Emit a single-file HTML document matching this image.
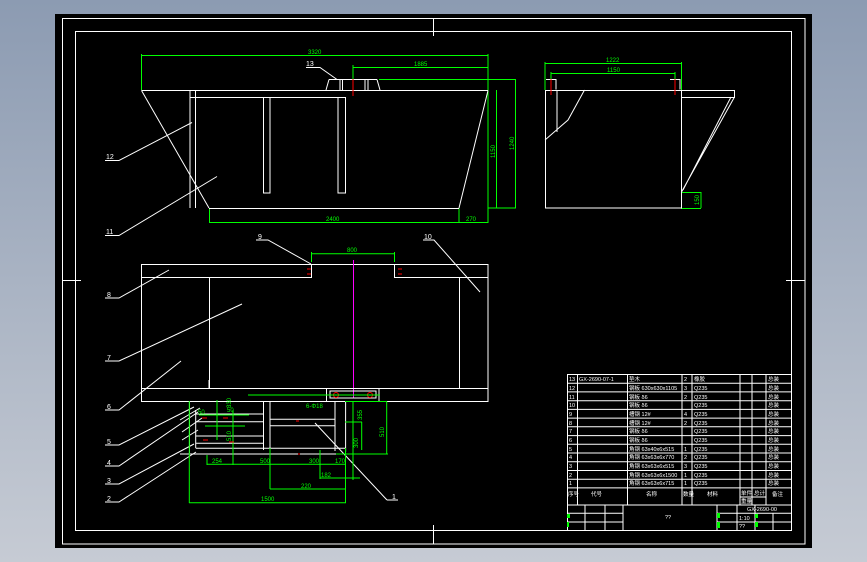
<!DOCTYPE html>
<html><head><meta charset="utf-8"><style>
html,body{margin:0;padding:0;width:867px;height:562px;overflow:hidden;background:linear-gradient(#8c9bb2,#c6cbd4);}
svg{position:absolute;left:0;top:0}
text{font-family:"Liberation Sans","Noto Sans CJK SC",sans-serif;}
.w{stroke:#fff;stroke-width:1;fill:none}
.g{stroke:#0f0;stroke-width:1;fill:none}
.r{stroke:#f00;stroke-width:1;fill:none}
.tg{fill:#0f0;font-size:6px}
.tw{fill:#fff;font-size:7px}
.tt{fill:#fff;font-size:5.5px}
</style></head><body>
<svg width="867" height="562" viewBox="0 0 867 562">
<rect x="55" y="14" width="757" height="534" fill="#000"/>
<rect x="62.5" y="18.5" width="742.5" height="525.5" class="w"/>
<rect x="75.5" y="31.5" width="716" height="499" class="w"/>
<path class="w" d="M433.5 18v18M433.5 525v19M62 280.5h19M786 280.5h19"/>

<!-- front view -->
<path class="g" d="M141.5 55.5H488M141.5 54V90M488 54v155M353 65v14M353 67.5H488M379 79.5h137M496.5 90v118M515.5 79v129M488 208h28M209.5 208v15M459 208v15M488 208v15M209 222.5h279"/>
<text class="tg" x="308" y="54">3320</text>
<text class="tg" x="414" y="66">1885</text>
<text class="tg" x="326" y="221">2400</text>
<text class="tg" x="466" y="221">270</text>
<text class="tg" transform="translate(495,158) rotate(-90)">1150</text>
<text class="tg" transform="translate(514,150) rotate(-90)">1240</text>
<path class="w" d="M141.5 90.5H488M190 97.5H346M141.5 90.5L209 208M488 90.5L459 208M209 208.5H459M190 90v118M195.5 90v118M263.5 97v96h6.5V97M338 97v96h7.5V97"/>
<path class="w" d="M329 79.5h48M326 90l3-10.5M380 90l-3-10.5M340 80v10M342.5 80v10M365 80v10M368 80v10"/>
<path class="r" d="M353 79v17"/>
<text class="tw" x="306" y="66">13</text>
<path class="w" d="M306 67.5h14l17 12"/>
<text class="tw" x="106" y="159">12</text><path class="w" d="M105 160.5h14l73-38"/>
<text class="tw" x="106" y="234">11</text><path class="w" d="M105 235.5h14l98-59"/>

<!-- side view -->
<path class="g" d="M545 63.5h136.5M545 62v28M681.5 62v28M551 73.5h124M551 72v8M675 72v8M681 192.5h20M701 192v16M681 208.5h20"/>
<text class="tg" x="606" y="62">1222</text>
<text class="tg" x="607" y="72">1150</text>
<text class="tg" transform="translate(699,205) rotate(-90)">150</text>
<path class="w" d="M545 90.5h189.5v7H681.5M545.5 90v118h136V90M734.5 97L681.5 192M731 97L683 190M557 90v42M584.5 90L568 120L545 140M546 79.5h10v10M670 79.5h10v10"/>
<path class="r" d="M551 79v16M675 79v16"/>

<!-- plan view -->
<rect x="141.5" y="264.5" width="346.5" height="137" class="w"/>
<path class="w" d="M141.5 277.5h170M394.5 277.5H488M141.5 388.5H326M379 388.5H488M209.5 277v111M459.5 277v111M311.5 264v14M394.5 264v14"/>
<path class="g" d="M311.5 253.8h83M311.5 252v10M394.5 252v10"/>
<text class="tg" x="347" y="252">800</text>
<path class="r" d="M307 269h4M307 274h4M398 269h4M398 274h4"/>
<path stroke="#f0f" d="M353.5 260v138" fill="none"/>
<rect x="326.5" y="388.5" width="52.5" height="13" class="w"/>
<rect x="330" y="391" width="46" height="7" class="w"/>
<circle cx="336" cy="395" r="2.5" class="r"/><circle cx="370" cy="395" r="2.5" class="r"/>
<text class="tw" x="258" y="239">9</text><path class="w" d="M256 240h12l43 24"/>
<text class="tw" x="424" y="239">10</text><path class="w" d="M423 240h11l46 52"/>
<text class="tw" x="107" y="297">8</text><path class="w" d="M105 298h14l50-28"/>
<text class="tw" x="107" y="360">7</text><path class="w" d="M105 361h14l123-57"/>
<text class="tw" x="107" y="409">6</text><path class="w" d="M105 410h14l62-49"/>
<text class="tw" x="107" y="444">5</text><path class="w" d="M105 445h14l75-38"/>
<text class="tw" x="107" y="465">4</text><path class="w" d="M105 466h14l79-54"/>
<text class="tw" x="107" y="483">3</text><path class="w" d="M105 484h14l75-40"/>
<text class="tw" x="107" y="501">2</text><path class="w" d="M105 502h14l77-50"/>
<text class="tw" x="392" y="499">1</text><path class="w" d="M387 500h11M387 500l-72-77"/>

<!-- lower detail -->
<path class="w" d="M189.5 401v52M195.7 410v38M263.5 401v49M270 401v47M335 401v50M345.6 401v51M209 380v8M195.7 414h68M195.7 421.7h68M195.7 436h68M195.7 443.3h68M195.7 448.3H345.6M180 454H336M270 419.3h65M270 425.7h65"/>
<path class="w" d="M180 420l20-12M182 432l20-14M182 440l16-10"/>
<path class="g" d="M248 395H380M345 401.5h42M386.7 401v53M336 454h52M189.3 401v102M189 502.7h157M270 448v41M270 489h76M345.5 448v55M207 464.3h139M207 455v10M233 440v25M353 401v79M320 478h40M320 450v29M361.7 422v28M345 422h17M199 415h50M205 426h20M225 426h20M217 400v40M233 410v30"/>
<text class="tg" x="212" y="463">254</text><text class="tg" x="260" y="463">500</text>
<text class="tg" x="309" y="463">300</text><text class="tg" x="335" y="463">170</text>
<text class="tg" x="321" y="477">182</text><text class="tg" x="301" y="488">220</text>
<text class="tg" x="261" y="501">1500</text><text class="tg" x="306" y="408">6-Φ18</text>
<text class="tg" transform="translate(362,420) rotate(-90)">355</text>
<text class="tg" transform="translate(358,448) rotate(-90)">300</text>
<text class="tg" transform="translate(384,437) rotate(-90)">510</text>
<text class="tg" transform="translate(231,408) rotate(-90)">330</text>
<text class="tg" transform="translate(231,441) rotate(-90)">510</text>
<text class="tg" x="198" y="414">50</text><text class="tg" x="227" y="412">50</text>
<path class="r" d="M202 418h5M223 418h5M203 440h5M229 442h5M296 421h3M298 454h2"/>

<!-- title block -->
<g class="w">
<rect x="567.5" y="374.5" width="224" height="156"/>
<path d="M567 383.2h224M567 391.9h224M567 400.7h224M567 409.4h224M567 418.1h224M567 426.8h224M567 435.6h224M567 444.3h224M567 453h224M567 461.7h224M567 470.5h224M567 479.2h224M567 487.9h224M567 505h224M567 513.3h56M567 522h56M717 513.3h74M717 522h74"/>
<path d="M577.5 374v131M627.5 374v131M682 374v131M692 374v131M740 374v131M752 374v131M766 374v131M740 497h26M585 505v25M605 505v25M623 505v25M717 505v25M737 505v25M755 505v25M773 513v17"/>
</g>
<g class="tt">
<text x="569" y="381">13</text><text x="579" y="381">GX-2690-07-1</text><text x="629" y="381">垫木</text><text x="684" y="381">2</text><text x="694" y="381">橡胶</text>
<text x="569" y="390">12</text><text x="629" y="390">钢板 630x630x1105</text><text x="684" y="390">3</text><text x="694" y="390">Q235</text>
<text x="569" y="399">11</text><text x="629" y="399">钢板 δ6</text><text x="684" y="399">2</text><text x="694" y="399">Q235</text>
<text x="569" y="407">10</text><text x="629" y="407">钢板 δ6</text><text x="694" y="407">Q235</text>
<text x="569" y="416">9</text><text x="629" y="416">槽钢 12#</text><text x="684" y="416">4</text><text x="694" y="416">Q235</text>
<text x="569" y="425">8</text><text x="629" y="425">槽钢 12#</text><text x="684" y="425">2</text><text x="694" y="425">Q235</text>
<text x="569" y="433">7</text><text x="629" y="433">钢板 δ6</text><text x="694" y="433">Q235</text>
<text x="569" y="442">6</text><text x="629" y="442">钢板 δ6</text><text x="694" y="442">Q235</text>
<text x="569" y="451">5</text><text x="629" y="451">角钢 63x40x6x515</text><text x="684" y="451">1</text><text x="694" y="451">Q235</text>
<text x="569" y="459">4</text><text x="629" y="459">角钢 63x63x6x770</text><text x="684" y="459">2</text><text x="694" y="459">Q235</text>
<text x="569" y="468">3</text><text x="629" y="468">角钢 63x63x6x515</text><text x="684" y="468">3</text><text x="694" y="468">Q235</text>
<text x="569" y="477">2</text><text x="629" y="477">角钢 63x63x6x1500</text><text x="684" y="477">1</text><text x="694" y="477">Q235</text>
<text x="569" y="485">1</text><text x="629" y="485">角钢 63x63x6x715</text><text x="684" y="485">1</text><text x="694" y="485">Q235</text>
<text x="568" y="496">序号</text><text x="591" y="496">代号</text><text x="646" y="496">名称</text><text x="683" y="496">数量</text><text x="707" y="496">材料</text><text x="741" y="495">单件</text><text x="754" y="495">总计</text><text x="772" y="496">备注</text>
<text x="741" y="503">重量</text><text x="665" y="519">??</text><text x="747" y="511">GX-2690-00</text>
<text x="739" y="520">1:10</text><text x="739" y="528">??</text>
</g>
<g class="tt"><text x="768" y="381">总装</text><text x="768" y="390">总装</text><text x="768" y="399">总装</text><text x="768" y="407">总装</text><text x="768" y="416">总装</text><text x="768" y="425">总装</text><text x="768" y="433">总装</text><text x="768" y="442">总装</text><text x="768" y="451">总装</text><text x="768" y="459">总装</text><text x="768" y="468">总装</text><text x="768" y="477">总装</text><text x="768" y="485">总装</text></g>
<g fill="#0f0"><rect x="567" y="514" width="3" height="4"/><rect x="567" y="522" width="2" height="5"/><rect x="717" y="513" width="3" height="5"/><rect x="717" y="522" width="3" height="6"/><rect x="755" y="514" width="3" height="4"/><rect x="755" y="522" width="3" height="5"/></g>
</svg>
</body></html>
